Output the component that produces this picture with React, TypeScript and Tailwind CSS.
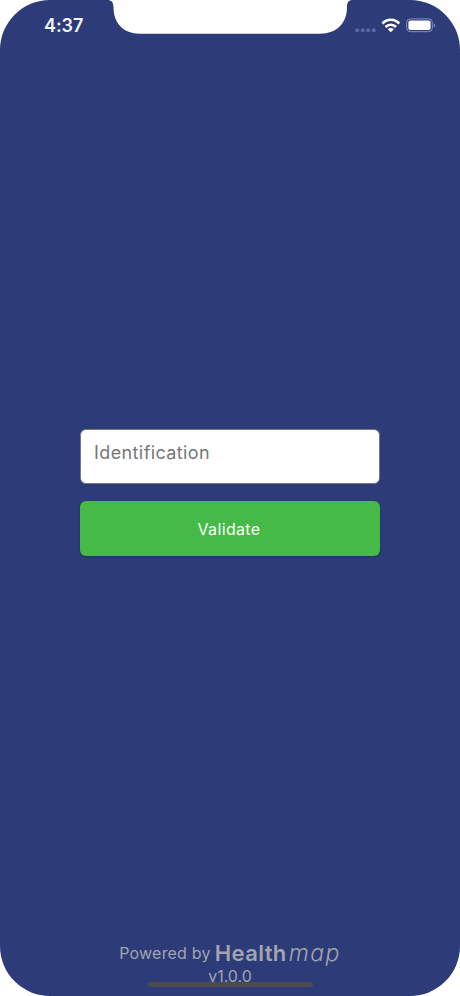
import React, { FC } from 'react'

const Notch: FC = () => {
  return (
    <svg className="absolute left-[107px] top-0" width="246" height="34" viewBox="0 0 246 34" fill="#fff">
      <path d="M0 0H246C241.500 0 240 2.500 240 7C240 23 230 33.700 213 33.700H33C16 33.700 6.500 23 6.500 7C6.500 2.500 4.500 0 0 0Z" />
    </svg>
  )
}

const StatusBar: FC = () => {
  return (
    <div className="relative flex h-[51px] shrink-0 items-center justify-between pl-11 pr-6">
      <Notch />
      <p className="text-[18px] leading-6 font-semibold tracking-[-0.1px] text-[#f1f5fd]">4:37</p>
      <div className="flex items-center">
        <svg width="22" height="16" viewBox="0 0 22 16" fill="#5b679f">
          <circle cx="2.200" cy="12.300" r="2" />
          <circle cx="7.700" cy="12.300" r="2" />
          <circle cx="13.200" cy="12.300" r="2" />
          <circle cx="18.700" cy="12.300" r="2" />
        </svg>
        <svg className="ml-1" width="20" height="16" viewBox="0 0 20 16" fill="none" stroke="#fff" strokeWidth="2.600">
          <path d="M1.400 5.500C6.200 0.500 13.400 0.500 18.200 5.500" />
          <path d="M4.500 9C7.500 6 12.100 6 15.100 9" />
          <path d="M9.800 14.300L6.700 11.200C8.400 9.500 11.200 9.500 12.900 11.200Z" fill="#fff" stroke="none" />
        </svg>
        <svg className="ml-[5px]" width="30" height="16" viewBox="0 0 30 16" fill="none">
          <rect x="0.700" y="0.900" width="25.600" height="12.800" rx="3.500" stroke="#8790bb" strokeWidth="1" />
          <rect x="2.400" y="2.600" width="22.200" height="9.400" rx="2" fill="#fff" />
          <path d="M27.800 5.200V9.600C29.600 8.800 29.600 6 27.800 5.200Z" fill="#8790bb" />
        </svg>
      </div>
    </div>
  )
}

const App: FC = () => {
  return (
    <div className="h-[996px] w-[460px] bg-white font-['Inter',sans-serif]">
      <div className="relative flex h-full flex-col overflow-hidden rounded-[50px] bg-[#2d3b78]">
        <StatusBar />

        <div className="flex flex-col px-20 pt-[378px]">
          <input
            className="h-[55px] rounded-[6px] border border-[#77797d] bg-white px-[13px] pb-[9px] text-[18px] tracking-[0.4px] placeholder:text-[#777]"
            placeholder="Identification"
          />
          <button className="mt-[17px] h-[55px] rounded-[6px] bg-[#45ba46] pr-[2px] text-[16px] tracking-[0.35px] text-white shadow-[0_1px_2px_rgba(0,0,0,0.2)]">
            Validate
          </button>
        </div>

        <div className="mt-auto flex flex-col items-center pb-[10px] text-[#a0a5ae]">
          <div className="flex items-end whitespace-nowrap">
            <span className="text-[16px] leading-[25px] tracking-[0.2px]">Powered by</span>
            <span className="ml-1 text-[22px] leading-[26px] font-semibold tracking-[0.4px]">Health</span>
            <span className="ml-[2px] text-[23px] leading-[26px] font-light italic tracking-[1.4px]">map</span>
          </div>
          <p className="text-[16px] leading-5">v1.0.0</p>
        </div>
        <div className="absolute bottom-[9px] left-[148px] h-[5px] w-[165px] rounded-full bg-[#4a4c50]"></div>
      </div>
    </div>
  )
}

export default App
